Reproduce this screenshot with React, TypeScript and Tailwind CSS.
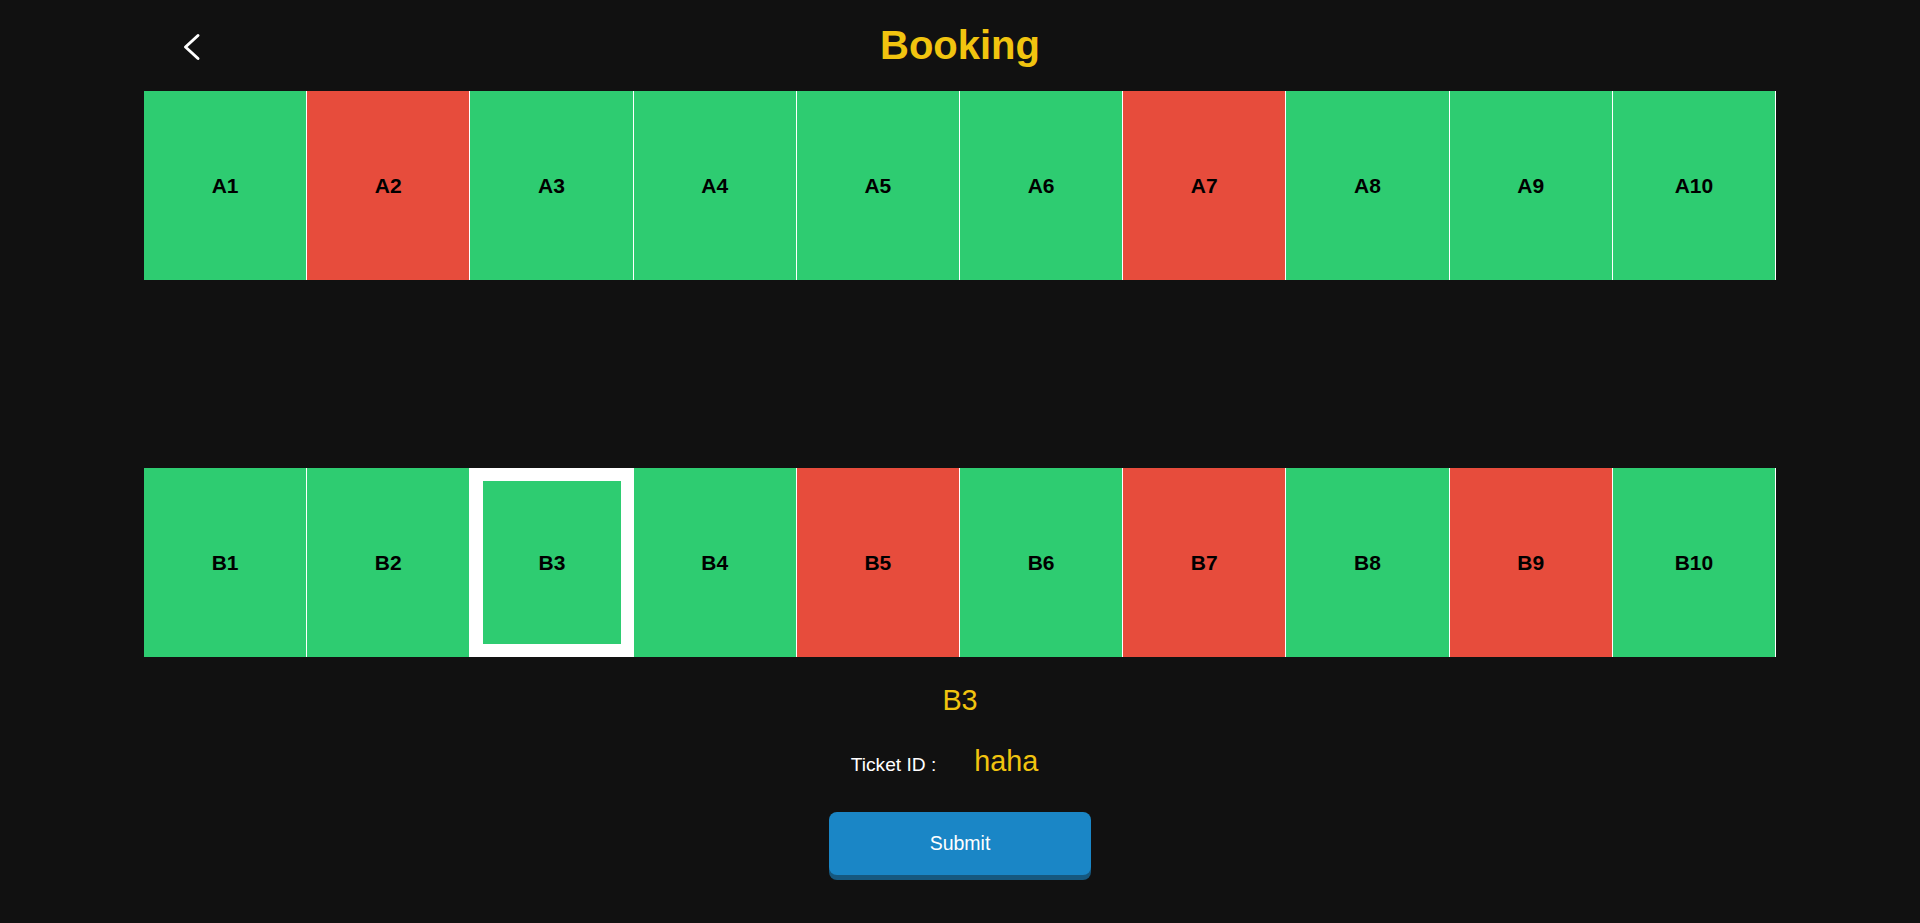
import { useState } from 'react';

type Seat = { id: string; taken: boolean };

const ROW_A: Seat[] = [
  { id: 'A1', taken: false },
  { id: 'A2', taken: true },
  { id: 'A3', taken: false },
  { id: 'A4', taken: false },
  { id: 'A5', taken: false },
  { id: 'A6', taken: false },
  { id: 'A7', taken: true },
  { id: 'A8', taken: false },
  { id: 'A9', taken: false },
  { id: 'A10', taken: false },
];

const ROW_B: Seat[] = [
  { id: 'B1', taken: false },
  { id: 'B2', taken: false },
  { id: 'B3', taken: false },
  { id: 'B4', taken: false },
  { id: 'B5', taken: true },
  { id: 'B6', taken: false },
  { id: 'B7', taken: true },
  { id: 'B8', taken: false },
  { id: 'B9', taken: true },
  { id: 'B10', taken: false },
];

function SeatRow({
  seats,
  selected,
  onSelect,
}: {
  seats: Seat[];
  selected: string;
  onSelect: (id: string) => void;
}) {
  return (
    <div className="grid grid-cols-10 h-[189px]">
      {seats.map((seat) => (
        <button
          key={seat.id}
          disabled={seat.taken}
          onClick={() => onSelect(seat.id)}
          className={`flex items-center justify-center text-[21px] font-bold text-black ${
            seat.taken ? 'bg-[#e74c3c]' : 'bg-[#2ecc71]'
          } ${selected === seat.id ? 'border-[13px] border-white' : 'border-r border-white'}`}
        >
          {seat.id}
        </button>
      ))}
    </div>
  );
}

export default function App() {
  const [selected, setSelected] = useState('B3');

  return (
    <main className="min-h-screen bg-[#111111] font-['Liberation_Sans',Arial,sans-serif]">
      <div className="w-[85%] mx-auto">
        {/* Header */}
        <div className="grid grid-cols-[1fr_auto_1fr] items-center h-[89px] mb-[2px]">
          <div className="pl-[39px] pt-[4px]">
            <svg width="20" height="30" viewBox="0 0 20 30" fill="none">
              <polyline
                points="15,3.5 2.5,15 15,26.5"
                stroke="white"
                strokeWidth="3"
                strokeLinecap="round"
                strokeLinejoin="round"
              />
            </svg>
          </div>
          <h1 className="text-[40px] leading-[46px] font-bold text-[#f1c40f]">Booking</h1>
          <div />
        </div>

        {/* Seats */}
        <div className="flex flex-col gap-[188px]">
          <SeatRow seats={ROW_A} selected={selected} onSelect={setSelected} />
          <SeatRow seats={ROW_B} selected={selected} onSelect={setSelected} />
        </div>

        {/* Summary */}
        <div className="flex flex-col items-center">
          <p className="mt-[27px] text-[28.8px] leading-[33px] text-[#f1c40f]">{selected}</p>
          <div className="mt-[28px] flex items-baseline">
            <span className="text-[19.2px] leading-[33px] text-white">Ticket ID :</span>
            <span className="ml-[38px] w-[95px] text-[28.8px] leading-[33px] text-[#f1c40f]">haha</span>
          </div>
          <button className="mt-[31px] w-[262px] h-[63px] rounded-lg bg-[#1a86c6] text-[19.5px] text-white shadow-[0_5px_0_#16587f]">
            Submit
          </button>
        </div>
      </div>
    </main>
  );
}
